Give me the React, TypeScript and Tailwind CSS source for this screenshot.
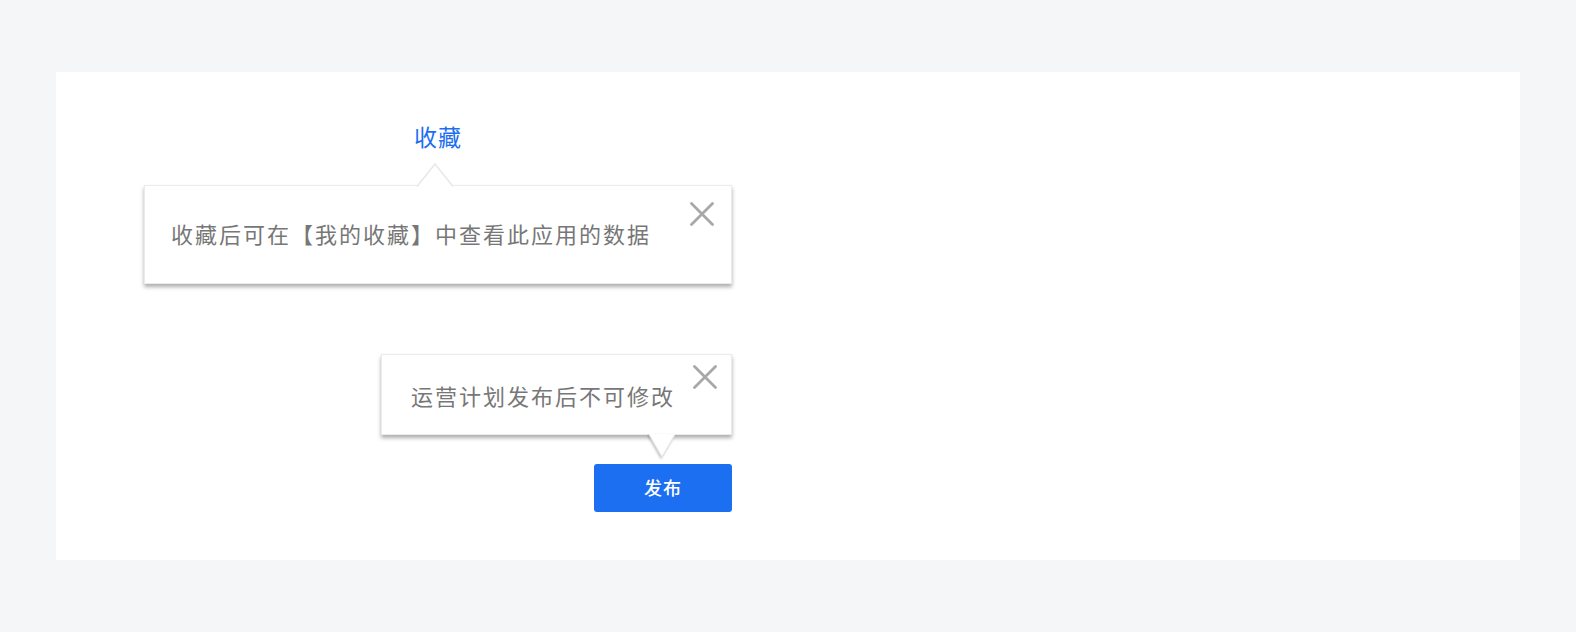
import React from 'react';

const font = { fontFamily: '"Noto Sans", "Noto Sans CJK SC", sans-serif' };

function CloseIcon({ className }: { className?: string }) {
  return (
    <svg className={className} width="24" height="24" viewBox="0 0 24 24" fill="none">
      <path d="M1.5 1.5 L22.5 22.5 M22.5 1.5 L1.5 22.5" stroke="#a8a8a8" strokeWidth="2.8" strokeLinecap="round" />
    </svg>
  );
}

export default function App() {
  return (
    <main className="min-h-screen bg-[#f5f6f8] px-[56px] py-[72px]" style={font}>
      <div className="bg-white h-[488px] pl-[88px] pt-[49px]">
        <div className="w-[588px] flex flex-col">
          {/* title */}
          <div className="pl-[270px]">
            <span className="text-[23px] leading-[32px] tracking-[1px] text-[#1d6ff2]">收藏</span>
          </div>

          {/* tooltip 1 */}
          <div className="relative mt-[32px] h-[99px] w-[588px] bg-white border border-[#ebebeb] shadow-[0_3px_4px_rgba(0,0,0,0.32)] flex items-center pl-[26px]">
            <svg className="absolute top-[-23px] left-[272px]" width="36" height="24" viewBox="0 0 36 24">
              <path d="M0 24 L18 1 L36 24 Z" fill="white" />
              <path d="M0 23.5 L18 1 L36 23.5" fill="none" stroke="#e8e8e8" strokeWidth="1.5" />
            </svg>
            <span className="text-[22px] tracking-[2px] text-[#777777]">收藏后可在【我的收藏】中查看此应用的数据</span>
            <CloseIcon className="absolute top-[16px] right-[17px]" />
          </div>

          {/* tooltip 2 */}
          <div className="relative self-end mt-[70px] h-[81px] w-[351px] bg-white border border-[#ebebeb] shadow-[0_3px_4px_rgba(0,0,0,0.32)] flex items-center pl-[29px] pt-[4px]">
            <svg className="absolute bottom-[-24px] left-[267px] drop-shadow-[-1px_1px_1px_rgba(0,0,0,0.25)]" width="26" height="24" viewBox="0 0 26 24">
              <path d="M0 0 L13 23 L26 0 Z" fill="white" />
              <path d="M0 0.5 L13 23 L26 0.5" fill="none" stroke="#e6e6e6" strokeWidth="1.2" />
            </svg>
            <span className="text-[22px] tracking-[2px] text-[#777777]">运营计划发布后不可修改</span>
            <CloseIcon className="absolute top-[10px] right-[14px]" />
          </div>

          {/* button */}
          <button className="self-end mt-[29px] w-[138px] h-[48px] rounded-[3px] bg-[#1d6ff2] text-white text-[18px] font-medium tracking-[1px]">
            发布
          </button>
        </div>
      </div>
    </main>
  );
}
